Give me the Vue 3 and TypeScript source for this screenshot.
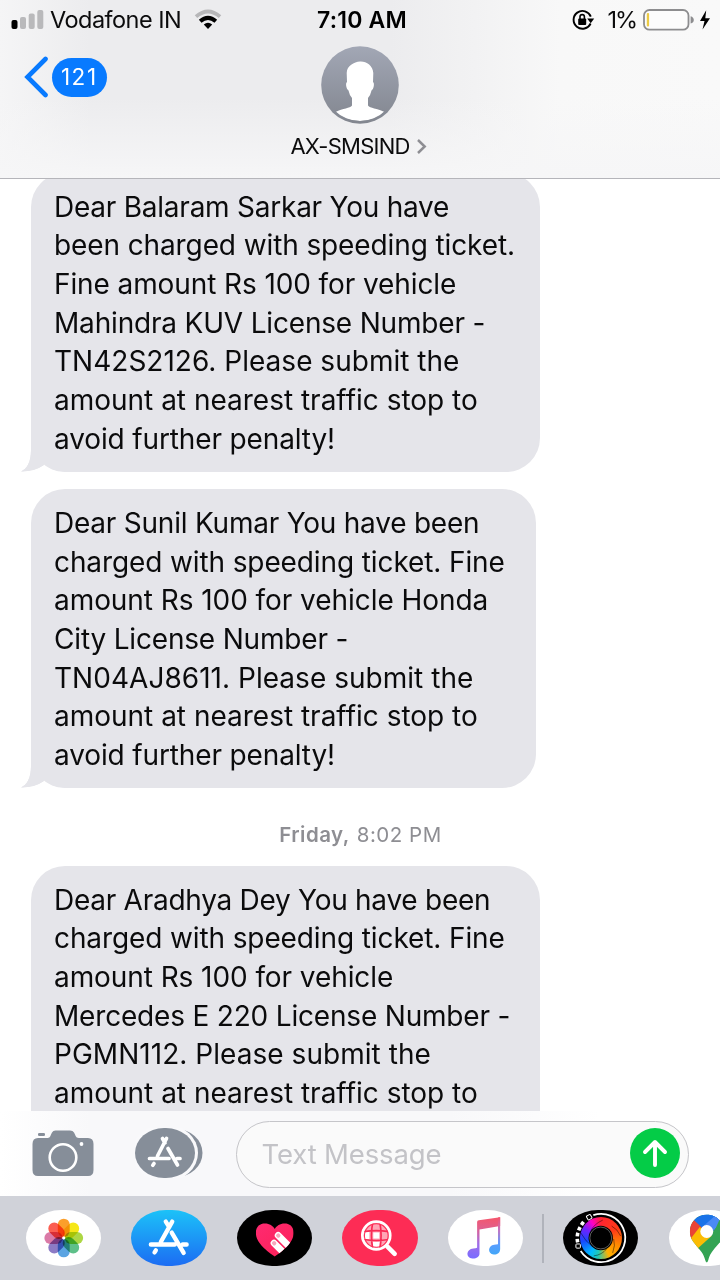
<script setup lang="ts">
interface Line { text: string; width: number }
interface Message { id: number; size: string; lines: Line[] }

const family = 'Inter, "Noto Sans", sans-serif'
const pen = document.createElement('canvas').getContext('2d')!

// Tracking that makes the ink of a line span the given width.
function track(text: string, width: number, size: number, weight = 400) {
  pen.font = `${weight} ${size}px ${family}`
  const m = pen.measureText(text)
  const ink = m.actualBoundingBoxRight + m.actualBoundingBoxLeft
  return { letterSpacing: `${((width - ink) / (text.length - 1)).toFixed(3)}px` }
}

const messages: Message[] = [
  { id: 1, size: 'wide first', lines: [
    { text: 'Dear Balaram Sarkar You have', width: 392 },
    { text: 'been charged with speeding ticket.', width: 457 },
    { text: 'Fine amount Rs 100 for vehicle', width: 399 },
    { text: 'Mahindra KUV License Number -', width: 427.5 },
    { text: 'TN42S2126. Please submit the', width: 403 },
    { text: 'amount at nearest traffic stop to', width: 422 },
    { text: 'avoid further penalty!', width: 278 },
  ] },
  { id: 2, size: 'narrow', lines: [
    { text: 'Dear Sunil Kumar You have been', width: 422 },
    { text: 'charged with speeding ticket. Fine', width: 448.5 },
    { text: 'amount Rs 100 for vehicle Honda', width: 431.5 },
    { text: 'City License Number -', width: 291.5 },
    { text: 'TN04AJ8611. Please submit the', width: 417 },
    { text: 'amount at nearest traffic stop to', width: 422 },
    { text: 'avoid further penalty!', width: 278 },
  ] },
  { id: 3, size: 'wide', lines: [
    { text: 'Dear Aradhya Dey You have been', width: 433 },
    { text: 'charged with speeding ticket. Fine', width: 448.5 },
    { text: 'amount Rs 100 for vehicle', width: 337 },
    { text: 'Mercedes E 220 License Number -', width: 452.5 },
    { text: 'PGMN112. Please submit the', width: 373.5 },
    { text: 'amount at nearest traffic stop to', width: 422 },
  ] },
]

const petals = [
  ['#fb9a20', 0], ['#f6e60c', 45], ['#a9d53a', 90], ['#55bd83', 135],
  ['#529fe0', 180], ['#8674c2', 225], ['#d873a2', 270], ['#fb5548', 315],
] as const
</script>

<template>
  <div class="phone">
    <header class="header">
      <div class="status">
        <div class="carrier">
          <svg class="signal" width="34" height="22" viewBox="0 0 34 22">
            <rect x="1.5" y="11" width="6" height="9" rx="2" fill="#000" />
            <rect x="10" y="8" width="6" height="12" rx="2" fill="#b9b9bb" />
            <rect x="18.7" y="4.5" width="6" height="15.5" rx="2" fill="#b9b9bb" />
            <rect x="27.3" y="1" width="6" height="19" rx="2" fill="#b9b9bb" />
          </svg>
          <span class="carrier-name" :style="track('Vodafone IN', 130, 23.5)">Vodafone IN</span>
          <svg class="wifi" width="28" height="22" viewBox="0 0 28 22" fill="none">
            <path d="M2 7.6Q14-2.6 26 7.6" stroke="#b7b7b9" stroke-width="3.8" />
            <path d="M6.2 12.300Q14 5.400 21.8 12.300" stroke="#000" stroke-width="4" />
            <path d="M9.8 15.5Q14 12 18.2 15.5L14 20Z" fill="#000" />
          </svg>
        </div>
        <span class="clock" :style="track('7:10 AM', 88.5, 23, 600)">7:10 AM</span>
        <div class="power">
          <svg width="24" height="24" viewBox="0 0 24 24" fill="none">
            <path d="M18.600 15.5A8.9 8.9 0 1 1 18.800 8.7" stroke="#000" stroke-width="1.9" />
            <path d="M15.200 10.500h7l-3.500 4.700Z" fill="#000" />
            <rect x="6.2" y="10.4" width="8" height="6.6" rx="1" fill="#000" />
            <path d="M8 11V8.8a2.2 2.2 0 0 1 4.4 0V11" stroke="#000" stroke-width="1.6" />
          </svg>
          <span class="percent" :style="track('1%', 27.5, 23.5)">1%</span>
          <svg class="battery" width="68" height="24" viewBox="0 0 68 24">
            <rect x="1" y="2" width="44.5" height="19.7" rx="5.5" fill="#fff" fill-opacity=".55" stroke="#8d8d8f" stroke-width="1.8" />
            <rect x="3.8" y="5" width="2.3" height="13.6" rx="1" fill="#eccb45" />
            <path d="M47.6 8.2q3.2 1 3.2 3.7t-3.2 3.7Z" fill="#8d8d8f" />
            <path d="M63.2 2.3 57 13h4.5l-2 8.5L67 10.3h-4.7Z" fill="#000" />
          </svg>
        </div>
      </div>

      <div class="contact-row">
        <div class="back">
          <svg width="25" height="42" viewBox="0 0 25 42" fill="none">
            <path d="M21.500 3 3.500 21l18 18" stroke="#087aff" stroke-width="4.6" stroke-linecap="round" stroke-linejoin="miter" />
          </svg>
          <span class="unread"><span :style="track('121', 33, 22.5)">121</span></span>
        </div>
        <div class="contact">
          <svg class="avatar" width="78" height="78" viewBox="0 0 78 78">
            <defs>
              <linearGradient id="avatarFill" x1="0" y1="0" x2="0" y2="1">
                <stop offset="0" stop-color="#a2a7b5" /><stop offset="1" stop-color="#82868f" />
              </linearGradient>
              <clipPath id="avatarClip"><circle cx="39" cy="39" r="36" /></clipPath>
            </defs>
            <circle cx="39" cy="39" r="38.8" fill="url(#avatarFill)" />
            <path clip-path="url(#avatarClip)" fill="#fff" d="M39 15.500C45 15 52 19.500 52.300 27L52 36Q53.500 37 52.600 41 52 44 50.500 44.500 49.600 49 47 52v7.500C49 62.500 56 62 63.500 66Q54 75 39 75T14.500 66C22 62 29 62.500 31 59.500V52Q28.400 49 27.500 44.500 26 44 25.400 41 24.500 37 26 36L25.700 27C26 19.500 33 16 39 15.500Z" />
          </svg>
          <div class="name">
            <span :style="track('AX-SMSIND', 119, 22)">AX-SMSIND</span>
            <svg width="11" height="17" viewBox="0 0 11 17" fill="none">
              <path d="M2 2l6.700 6.500L2 15" stroke="#8e8e93" stroke-width="2.500" />
            </svg>
          </div>
        </div>
      </div>
    </header>

    <main class="thread">
      <template v-for="m in messages" :key="m.id">
        <div v-if="m.id === 3" class="stamp">
          <b :style="track('Friday,', 67.5, 20.5, 600)">Friday,</b><span :style="track('8:02 PM', 82, 20.5)">8:02 PM</span>
        </div>
        <article class="bubble" :class="m.size">
          <p v-for="(l, i) in m.lines" :key="i" :style="track(l.text, l.width, 28)">{{ l.text }}</p>
          <svg class="tail" width="42" height="42" viewBox="0 0 42 42">
            <path d="M10 0V20C10 32 6 39 0 41.500Q14 41.500 23 35L34 20V0Z" fill="#e5e5ea" />
            <path d="M0 42Q14 41.500 23 35 31 42 42 42Z" fill="#fff" />
            <path d="M0 41.500Q14 41.500 23 35L23 20H10C10 32 6 39 0 41.500Z" fill="#e5e5ea" />
          </svg>
        </article>
      </template>
    </main>

    <section class="composer">
      <svg class="camera" width="62" height="48" viewBox="0 0 62 48">
        <path fill="#868e99" d="M6 9H15.500Q18 9 19 5.500L20 3.500Q21 1.500 23.500 1.500H38Q41 1.500 42 3.500L43 5.500Q44 9 47 9H56Q61.500 9 61.500 15V41Q61.500 47 56 47H6Q.5 47 .5 41V15Q.5 9 6 9Z" />
        <rect x="6" y="4" width="7" height="3" rx="1.300" fill="#868e99" />
        <circle cx="31" cy="28.500" r="13.300" fill="none" stroke="#fff" stroke-width="2.600" />
        <circle cx="49.500" cy="15" r="1.900" fill="#fff" />
      </svg>
      <svg class="drawer" width="68" height="50" viewBox="0 0 68 50">
        <rect x="12" y="1" width="55.500" height="48" rx="27" ry="24" fill="#868e99" />
        <rect x="-3" y="-3" width="66" height="56" rx="31" ry="28" fill="#f9f9fb" />
        <rect width="60" height="50" rx="29" ry="25" fill="#868e99" />
        <g stroke="#fff" stroke-width="3.700" stroke-linecap="round" fill="none">
          <path d="M31.500 10.500 22.500 28M27.500 10.500 30 15M14.500 30.500H34M42 30.500H45M33 20.500 42.500 37M19 35.500 17.800 37.300" />
        </g>
      </svg>
      <div class="field">
        <span class="placeholder" :style="track('Text Message', 178, 27.5)">Text Message</span>
        <svg width="50" height="50" viewBox="0 0 50 50" fill="none">
          <circle cx="25" cy="25" r="25" fill="#04cc47" />
          <path d="M25 37V14.500M15 24 25 14 35 24" stroke="#fff" stroke-width="3.900" stroke-linecap="round" stroke-linejoin="round" />
        </svg>
      </div>
    </section>

    <nav class="apps">
      <div class="app white">
        <svg viewBox="0 0 76 56">
          <g class="flower">
            <rect v-for="p in petals" :key="p[1]" x="32" y="8.500" width="12" height="18.500" rx="6" :fill="p[0]" fill-opacity=".95" :transform="`rotate(${p[1]} 38 28)`" />
          </g>
          <circle cx="38" cy="28" r="1.500" fill="#fff" />
        </svg>
      </div>
      <div class="app store">
        <svg viewBox="0 0 76 56" fill="none" stroke="#fff" stroke-width="4.400" stroke-linecap="round">
          <path d="M41.500 11.500 30 32M35 11.500 38.500 17M20 34.500H44M52 34.500H56M41 22.500 53 43M25 40.500 23.700 42.500" />
        </svg>
      </div>
      <div class="app black">
        <svg viewBox="0 0 76 56">
          <defs>
            <linearGradient id="heartFill" x1="0" y1="0" x2="1" y2="1"><stop stop-color="#ff2f7d" /><stop offset="1" stop-color="#fb1c4c" /></linearGradient>
            <clipPath id="heartClip"><path d="M38 46.500C31 42 19 33 19 23 19 16 23.500 13.500 28 13.500 33 13.500 36 16 38 19 40 16 43 13.500 48 13.500 52.500 13.500 57 16 57 23 57 33 45 42 38 46.500Z" /></clipPath>
          </defs>
          <g clip-path="url(#heartClip)">
            <rect width="76" height="56" fill="url(#heartFill)" />
            <g transform="rotate(-45 41.500 25.500)" fill="#fff">
              <rect x="38.100" y="22" width="6.800" height="30" rx="3.400" />
              <rect x="29.700" y="24.500" width="6.800" height="28" rx="3.400" />
              <rect x="39.500" y="23.500" width="4" height="4.200" rx="1.700" fill="#f7a7bd" />
              <rect x="31.100" y="26" width="4" height="4.200" rx="1.700" fill="#f7a7bd" />
            </g>
          </g>
        </svg>
      </div>
      <div class="app pink">
        <svg viewBox="0 0 76 56">
          <defs><clipPath id="globeClip"><circle cx="34.500" cy="25.500" r="12.400" /></clipPath></defs>
          <circle cx="34.500" cy="25.500" r="14" fill="none" stroke="#fff" stroke-width="2.800" />
          <path d="M45.500 36.500 53 44" stroke="#fff" stroke-width="4.600" stroke-linecap="round" />
          <g clip-path="url(#globeClip)">
            <rect x="22" y="13" width="25" height="25" fill="#ffa6b6" />
            <path d="M31.500 22.500h6v6h-6ZM22 22h5.500v7H22ZM31 32h7v6h-7Z" fill="#fff" />
            <path d="M30.800 13Q28.500 25.500 30.800 38M38.200 13Q40.500 25.500 38.200 38M22 21.500Q34.500 19.500 47 21.500M22 29.500Q34.500 31.500 47 29.500" stroke="#f92b55" stroke-width="1.700" fill="none" />
            <circle cx="34.500" cy="25.500" r="12" fill="none" stroke="#fd2c55" stroke-width="1.200" />
          </g>
        </svg>
      </div>
      <div class="app white">
        <svg viewBox="0 0 76 56">
          <defs>
            <linearGradient id="noteFill" gradientUnits="userSpaceOnUse" x1="39" y1="7" x2="36" y2="49">
              <stop stop-color="#f5566b" /><stop offset=".28" stop-color="#e0608e" /><stop offset=".65" stop-color="#a06ee8" /><stop offset="1" stop-color="#7a6cff" />
            </linearGradient>
            <linearGradient id="noteSide" gradientUnits="userSpaceOnUse" x1="50" y1="7" x2="50" y2="45">
              <stop stop-color="#f65169" /><stop offset=".35" stop-color="#c275c4" /><stop offset=".7" stop-color="#5c9cff" /><stop offset="1" stop-color="#41a7f7" />
            </linearGradient>
          </defs>
          <path fill="url(#noteFill)" d="M29.300 12Q29.300 10.500 31 10.200L52.500 7v9L31.700 19.500V43.500C31.700 47 28 49 24.500 48.600 17.500 48.200 18 39 25.500 38.500Q28 38.300 29.300 37.700Z" />
          <path fill="url(#noteSide)" d="M50.300 7.300 52.500 7V39C52.500 43 49 45 46 44.600 39.500 44 40 35.500 46.500 34.800L50.300 34.200Z" />
        </svg>
      </div>
      <i class="divider"></i>
      <div class="app black">
        <div class="wheel"></div>
        <svg viewBox="0 0 76 56" fill="none">
          <circle cx="38" cy="28" r="12.300" fill="#000" />
          <circle cx="38" cy="28" r="11" stroke="#777" stroke-width=".8" />
          <path d="M49 16Q55 19 58 26M51 29Q53 35 50 43M44 39Q39 45 31 46M29 36Q23 32 18 23M28 21Q31 14 40 10" stroke="#000" stroke-opacity=".55" stroke-width=".8" />
          <path d="M30.500 5A24.300 24.300 0 1 1 17.800 41" stroke="#fff" stroke-width="1.800" />
          <path d="M14.800 32.500Q12.500 22 21 11.500" stroke="#fff" stroke-width="3.600" stroke-dasharray="3.600 2.600" />
          <g stroke="#fff" stroke-width="1"><rect x="13" y="34" width="4.500" height="4.200" rx=".8" /><rect x="24" y="5" width="4.500" height="4.500" rx=".8" transform="rotate(-30 26 7)" /></g>
        </svg>
      </div>
      <div class="app white last">
        <svg viewBox="0 0 76 56">
          <defs><clipPath id="pinClip"><path d="M38 4.500C28 4.500 21 12 21 21.500 21 34 34 38 36.500 50.500Q38 55 39.500 50.500C42 38 55 34 55 21.500 55 12 48 4.500 38 4.500Z" /></clipPath></defs>
          <g clip-path="url(#pinClip)">
            <rect width="76" height="56" fill="#34a353" />
            <path d="M18 0H60L38 22 25 11Z" fill="#1a73e8" />
            <path d="M44 4 60 6V16H49L38 28 32 16Z" fill="#4a8af4" />
            <path d="M25 10 33 17.500 20 33V10Z" fill="#ea4335" />
            <path d="M31 17 44 26.500 27.500 41 20 31Z" fill="#fbbc04" />
            <path d="M51 9 60 10V30L26 41 44 25Z" fill="#34a353" />
            <path d="M51 9 39 22 32 16 43 4Z" fill="#4a8af4" />
            <path d="M26 9 33 17.500 47 5 38 3Z" fill="#1a73e8" />
          </g>
          <circle cx="38" cy="21.500" r="6.500" fill="#fff" />
        </svg>
      </div>
    </nav>
  </div>
</template>

<style>
body { margin: 0; background: #fff; }
</style>

<style scoped>
.phone { width: 720px; height: 1280px; display: flex; flex-direction: column; overflow: hidden; background: #fff; font-family: Inter, "Noto Sans", sans-serif; color: #0b0b0c; }
.phone span, .phone b { white-space: nowrap; }
svg { display: block; flex: none; }
.header { height: 179px; box-sizing: border-box; flex: none; border-bottom: 1.500px solid #b5b5ba; background: linear-gradient(180deg, rgba(248,248,248,0) 55%, #f6f6f7 100%), linear-gradient(90deg, #f5f5f6 0, #ececee 90px, #ececee 390px, #f8f8f8 560px, #f9f9f9 100%); }
.status { height: 40px; display: grid; grid-template-columns: 1fr auto 1fr; align-items: center; }
.carrier { display: flex; align-items: center; padding-left: 10px; }
.carrier-name { font-size: 23.500px; margin-left: 6px; width: 130px; padding-bottom: 1px; }
.wifi { margin-left: 14px; }
.clock { font-size: 23px; font-weight: 600; color: #000; padding-left: 4px; }
.power { display: flex; align-items: center; justify-content: flex-end; padding-right: 9px; }
.percent { font-size: 23.500px; margin: 0 7px 1px 11px; }
.contact-row { display: grid; grid-template-columns: 1fr auto 1fr; align-items: start; padding-top: 6px; }
.back { display: flex; align-items: center; gap: 3px; padding: 10px 0 0 24px; }
.unread { width: 54.500px; height: 39px; box-sizing: border-box; padding-bottom: 1px; border-radius: 20px; background: #087aff; color: #fff; display: flex; align-items: center; justify-content: center; font-size: 22.500px; }
.contact { display: flex; flex-direction: column; align-items: center; width: 140px; }
.name { display: flex; align-items: center; gap: 6px; font-size: 22px; line-height: 28px; margin-top: 8px; padding-right: 3px; }
.name svg { margin-top: 1px; }
.thread { flex: 1; min-height: 0; overflow: hidden; display: flex; flex-direction: column; align-items: flex-start; padding-left: 31px; }
.bubble { position: relative; flex: none; box-sizing: border-box; height: 299px; margin-bottom: 17.500px; padding: 15px 0 13px 23px; border-radius: 34px; background: #e5e5ea; }
.wide { width: 509px; }
.narrow { width: 505px; }
.first { margin-top: -6.500px; }
.bubble p { margin: 0; font-size: 28px; line-height: 38.670px; white-space: pre; }
.tail { position: absolute; left: -10px; bottom: 0; }
.stamp { align-self: center; display: flex; gap: 7px; flex: none; height: 28px; line-height: 28px; font-size: 20.500px; color: #8e8e93; margin: 15.500px 30px 16.500px 0; }
.stamp b { font-weight: 600; }
.composer { height: 85px; box-sizing: border-box; flex: none; display: flex; align-items: center; padding: 0 31px 0 32px; background: linear-gradient(90deg, #fff, #f8f8fa 90px, #f8f8fa 450px, #fff 600px); }
.camera, .drawer { margin-bottom: 1px; }
.drawer { margin-left: 41px; }
.field { flex: 1; margin-left: 33px; height: 67px; margin-top: 1px; box-sizing: border-box; border: 1.500px solid #c5c5c9; border-radius: 34px; display: flex; align-items: center; justify-content: space-between; padding: 0 8px 2px 24.500px; background: #fafafa; }
.placeholder { font-size: 27.500px; color: #c3c3c7; padding-top: 2px; }
.apps { height: 84px; flex: none; display: flex; align-items: center; gap: 30px; padding-left: 25.500px; background: #d0d2d9; overflow: hidden; }
.app { position: relative; width: 75.500px; height: 56px; flex: none; border-radius: 35px / 28px; overflow: hidden; }
.app svg { position: relative; width: 100%; height: 100%; }
.last { margin-left: 1px; }
.white { background: #fff; }
.black { background: #000; }
.pink { background: #fd2c55; }
.store { background: linear-gradient(180deg, #1cc2f8, #1c6cf3); }
.flower rect { mix-blend-mode: multiply; }
.flower { isolation: isolate; }
.divider { width: 1.500px; height: 49px; background: #b0b3bb; margin: 0 -11px; flex: none; }
.wheel { position: absolute; left: 17px; top: 7px; width: 42px; height: 42px; border-radius: 50%; background: conic-gradient(#ff2430, #ff3b18 60deg, #ff8c00 115deg, #ffb000 155deg, #21c8b5 190deg, #00baff 215deg, #1748ff 260deg, #7022ff 300deg, #ff00c8 330deg, #ff2430); }
</style>
